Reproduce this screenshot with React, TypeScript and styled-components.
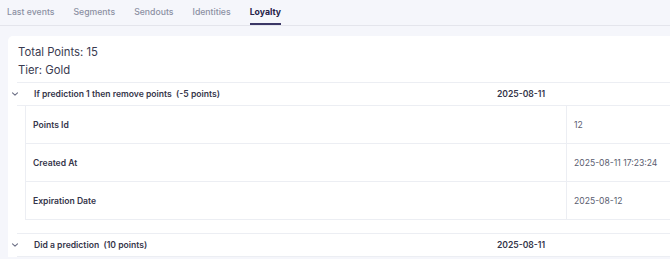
import styled, { createGlobalStyle } from "styled-components";

const GlobalStyle = createGlobalStyle`
  html, body {
    margin: 0;
    padding: 0;
    background: #f5f6fb;
    overflow: hidden;
    font-family: "Inter", "Noto Sans", sans-serif;
  }
`;

const tabs = ["Last events", "Segments", "Sendouts", "Identities", "Loyalty"];

const entries = [
  {
    title: "If prediction 1 then remove points",
    points: "(-5 points)",
    date: "2025-08-11",
    open: true,
    rows: [
      { label: "Points Id", value: "12" },
      { label: "Created At", value: "2025-08-11 17:23:24" },
      { label: "Expiration Date", value: "2025-08-12" },
    ],
  },
  {
    title: "Did a prediction",
    points: "(10 points)",
    date: "2025-08-11",
    open: false,
    rows: [],
  },
];

const Chevron = () => (
  <svg width="8" height="8" viewBox="0 0 8 8" fill="none">
    <path d="M1.5 2.8 L4 5.2 L6.5 2.8" stroke="#6b6f85" strokeWidth="1.1" strokeLinecap="round" strokeLinejoin="round" />
  </svg>
);

const App = () => {
  return (
    <>
      <GlobalStyle />
      <Page>
        <TabBar>
          {tabs.map((t) => (
            <Tab key={t} active={t === "Loyalty"}>
              {t}
            </Tab>
          ))}
        </TabBar>
        <Card>
          <Summary>
            <SummaryLine>Total Points: 15</SummaryLine>
            <SummaryLine>Tier: Gold</SummaryLine>
          </Summary>
          {entries.map((e) => (
            <Entry key={e.title}>
              <EntryHeader>
                <ChevronCell>
                  <Chevron />
                </ChevronCell>
                <EntryTitle>
                  {e.title}&nbsp;&nbsp;{e.points}
                </EntryTitle>
                <EntryDate>{e.date}</EntryDate>
              </EntryHeader>
              {e.open && (
                <DetailTable>
                  {e.rows.map((r) => (
                    <DetailRow key={r.label}>
                      <DetailLabel>{r.label}</DetailLabel>
                      <DetailValue>{r.value}</DetailValue>
                    </DetailRow>
                  ))}
                </DetailTable>
              )}
            </Entry>
          ))}
        </Card>
      </Page>
    </>
  );
};

export default App;

const Page = styled("div")`
  width: 760px;
  height: 259px;
  overflow: hidden;
`;

const TabBar = styled("div")`
  display: flex;
  gap: 19px;
  height: 25px;
  padding-left: 7px;
  border-bottom: 1px solid #e4e5ec;
`;

const Tab = styled("div")<{ active?: boolean }>`
  display: flex;
  align-items: center;
  height: 23px;
  font-size: 8.7px;
  font-weight: ${(p) => (p.active ? 700 : 500)};
  color: ${(p) => (p.active ? "#25224a" : "#8c90a3")};
  border-bottom: 2px solid ${(p) => (p.active ? "#3b3766" : "transparent")};
  margin-bottom: -1px;
`;

const Card = styled("div")`
  margin: 10px 0 0 8px;
  background: #ffffff;
  border-top-left-radius: 5px;
  padding: 7px 0 0 9px;
`;

const Summary = styled("div")`
  display: flex;
  flex-direction: column;
  padding-left: 1px;
  padding-bottom: 3px;
`;

const SummaryLine = styled("div")`
  font-size: 11.3px;
  line-height: 18px;
  color: #3a3a4f;
`;

const Entry = styled("div")`
  & + & {
    margin-top: 13px;
  }
`;

const EntryHeader = styled("div")`
  display: grid;
  grid-template-columns: 17px 442px 90px 1fr;
  align-items: center;
  height: 22px;
  border-top: 1px solid #eceef3;
  border-bottom: 1px solid #eceef3;
`;

const ChevronCell = styled("div")`
  display: flex;
  align-items: center;
  margin-left: -6px;
`;

const EntryTitle = styled("div")`
  font-size: 8.6px;
  font-weight: 600;
  color: #35354a;
  white-space: pre;
`;

const EntryDate = styled("div")`
  text-align: center;
  font-size: 8.6px;
  font-weight: 600;
  color: #35354a;
`;

const DetailTable = styled("div")`
  margin-left: 8px;
  border-left: 1px solid #eceef3;
  border-bottom: 1px solid #eceef3;
`;

const DetailRow = styled("div")`
  display: grid;
  grid-template-columns: 541px 1fr;
  height: 37px;
  & + & {
    border-top: 1px solid #eceef3;
  }
`;

const DetailLabel = styled("div")`
  display: flex;
  align-items: center;
  padding-left: 7px;
  font-size: 8.6px;
  font-weight: 600;
  color: #35354a;
  border-right: 1px solid #eceef3;
`;

const DetailValue = styled("div")`
  display: flex;
  align-items: center;
  padding-left: 7px;
  font-size: 8.6px;
  color: #5a5d70;
`;
